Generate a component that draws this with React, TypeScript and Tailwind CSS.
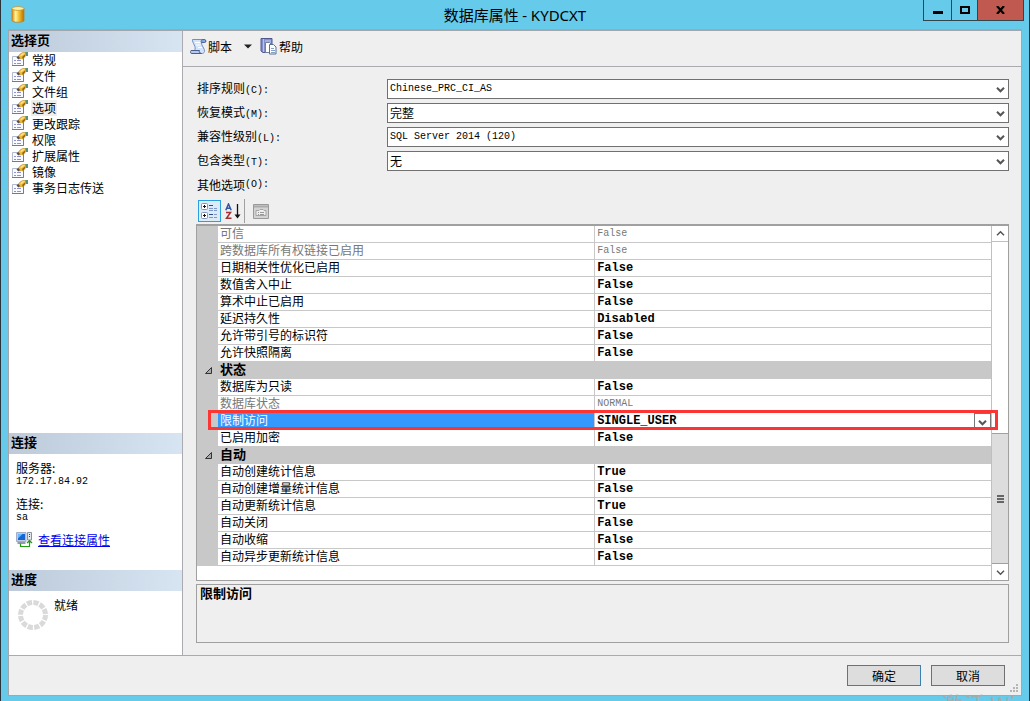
import React from "react";

const pages = ["常规", "文件", "文件组", "选项", "更改跟踪", "权限", "扩展属性", "镜像", "事务日志传送"];

type Field = { id: string; label: string; hotkey: string; value: string; latin: boolean };
const fields: Field[] = [
  { id: "collation", label: "排序规则", hotkey: "C", value: "Chinese_PRC_CI_AS", latin: true },
  { id: "recovery", label: "恢复模式", hotkey: "M", value: "完整", latin: false },
  { id: "compat", label: "兼容性级别", hotkey: "L", value: "SQL Server 2014 (120)", latin: true },
  { id: "contain", label: "包含类型", hotkey: "T", value: "无", latin: false },
];

type Row = { name: string; value?: string; muted?: boolean; group?: boolean; selected?: boolean };
const rows: Row[] = [
  { name: "可信", value: "False", muted: true },
  { name: "跨数据库所有权链接已启用", value: "False", muted: true },
  { name: "日期相关性优化已启用", value: "False" },
  { name: "数值舍入中止", value: "False" },
  { name: "算术中止已启用", value: "False" },
  { name: "延迟持久性", value: "Disabled" },
  { name: "允许带引号的标识符", value: "False" },
  { name: "允许快照隔离", value: "False" },
  { name: "状态", group: true },
  { name: "数据库为只读", value: "False" },
  { name: "数据库状态", value: "NORMAL", muted: true },
  { name: "限制访问", value: "SINGLE_USER", selected: true },
  { name: "已启用加密", value: "False" },
  { name: "自动", group: true },
  { name: "自动创建统计信息", value: "True" },
  { name: "自动创建增量统计信息", value: "False" },
  { name: "自动更新统计信息", value: "True" },
  { name: "自动关闭", value: "False" },
  { name: "自动收缩", value: "False" },
  { name: "自动异步更新统计信息", value: "False" },
];

function Chevron({ up = false, bold = false }: { up?: boolean; bold?: boolean }) {
  return (
    <svg width="9" height="9" viewBox="0 0 9 9" fill="none" stroke="#555" strokeWidth={bold ? 2 : 1.5}>
      <path d={up ? "M1 6.2 4.5 2.7 8 6.2" : "M1 2.8 4.5 6.3 8 2.8"} />
    </svg>
  );
}

function PageIcon() {
  return (
    <svg className="shrink-0" width="16" height="16" viewBox="0 0 16 16">
      <path d="M.5 4.5h11v9H.5z" fill="#fafaff" stroke="#b4bacb" />
      <path d="M11.500 6v7.500H0" fill="none" stroke="#737b92" />
      <path d="M2 8.500h2M5 8.500h4M2 11.500h2M5 11.500h4" stroke="#8892d8" />
      <path d="M5 5.500 8 2l2.500-1.500H14L13.500 4 11 7 9.500 6.500 8 7z" fill="#eeb93a" stroke="#b08324" strokeWidth=".5" />
      <path d="M8 3.500 10.500 1.200H13L9.500 4z" fill="#ffe68a" />
      <path d="m4.500 5.500 1.800-1.500L8 6 6.500 7.500z" fill="#55503c" />
      <path d="m10 5 3-2.500v1.800L11 7z" fill="#94691a" />
      <path d="M13.500 0H16v4h-2.200z" fill="#5d8f76" />
    </svg>
  );
}

function DatabaseIcon() {
  return (
    <svg width="14" height="17" viewBox="0 0 14 17">
      <defs>
        <linearGradient id="gold" x1="0" x2="1">
          <stop offset="0" stopColor="#d8890b" />
          <stop offset=".3" stopColor="#fff2a0" />
          <stop offset=".6" stopColor="#f5bd23" />
          <stop offset="1" stopColor="#b56d08" />
        </linearGradient>
      </defs>
      <path d="M1 2.500v12c0 2.300 12 2.300 12 0v-12z" fill="url(#gold)" stroke="#b98324" strokeWidth=".8" />
      <ellipse cx="7" cy="2.500" rx="6" ry="1.900" fill="#fff0a0" stroke="#c59432" strokeWidth=".8" />
    </svg>
  );
}

function ScriptIcon() {
  return (
    <svg width="17" height="17" viewBox="0 0 17 17" strokeLinejoin="round">
      <path d="M2.500 1.500h12c1.500 0 2 3 0 3h-3c-.5 3 3.500 6 3 9-.3 1.500-1.500 2-3 2l-7-3C7 9 2 5 2.500 1.500z" fill="#d3e3fa" stroke="#6f8fc5" />
      <path d="M11.500 4.500c-1-1 0-3 1.500-3h1.500c1.500 0 2 3 0 3z" fill="#8ba6d6" stroke="#4a65a0" />
      <path d="M1 12.500h8.500c-.8 1 .3 3 2 3H2c-1.800 0-2-2-1-3z" fill="#b5c9ec" stroke="#4a5f8c" />
      <path d="M5 4.500h5M6 7h4.500M8 9.500h4" stroke="#fff" strokeWidth="1.200" />
    </svg>
  );
}

function HelpIcon() {
  return (
    <svg width="17" height="17" viewBox="0 0 17 17">
      <path d="M1 .5h11v14H3L1 13z" fill="#8590c9" stroke="#4d568f" />
      <path d="M3.500 1v13" stroke="#b9c1ec" />
      <path d="M5 2h6v3H5z" fill="#a6b0df" />
      <path d="M5.500 4.500h4l2 2v8h-6z" fill="#fff" stroke="#71819d" />
      <path d="M9.500 6.500h4l2.500 2.500v7H9.500z" fill="#f8fbff" stroke="#5a7092" />
      <path d="M11 10.500h3M11 12.500h4M11 14.500h4" stroke="#87a1c4" />
    </svg>
  );
}

function CategoryIcon() {
  return (
    <svg width="17" height="17" viewBox="0 0 17 17" fill="none">
      <rect x=".5" y=".5" width="6" height="6" rx="1" fill="#fff" stroke="#8195bb" />
      <rect x=".5" y="9.500" width="6" height="6" rx="1" fill="#fff" stroke="#8195bb" />
      <path d="M2 3.500h3M3.500 2v3M2 12.500h3M3.500 11v3" stroke="#111" />
      <path d="M8 2.500h4M8 11.500h4" stroke="#2d4d83" />
      <path d="M8 5.500h4M13 5.500h3M8 7.500h4M13 7.500h3M8 14.500h4M13 14.500h3M13 11.500h3" stroke="#7f99c6" />
    </svg>
  );
}

function SortIcon() {
  return (
    <svg width="16" height="17" viewBox="0 0 16 17" fill="none">
      <path d="M.8 7.200 3.500 1 6.200 7.200M2 5.200h3" stroke="#2f55a8" strokeWidth="1.500" />
      <path d="M1 9.500h4.500L1.500 15.200H6.500" stroke="#a33030" strokeWidth="1.500" />
      <path d="M12.500 1v13" stroke="#111" strokeWidth="1.300" />
      <path d="M9.500 11.500h6l-3 4z" fill="#111" />
    </svg>
  );
}

function PropertyPageIcon() {
  return (
    <svg width="16" height="15" viewBox="0 0 16 15" fill="none">
      <path d="M.5.5h15v14H.5z" fill="#d3d3d3" stroke="#9a9a9a" />
      <path d="M1 2.500h14" stroke="#aaa" strokeWidth="2" />
      <path d="M3 6.500h3l1-1h3l1 1h2v5H3z" fill="#eee" stroke="#a5a5a5" />
      <path d="M5 8.500h1M7 8.500h4M5 10.500h1M7 10.500h4" stroke="#999" />
    </svg>
  );
}

function ConnectionIcon() {
  return (
    <svg className="shrink-0" width="17" height="16" viewBox="0 0 17 16" fill="none">
      <path d="M.5.5h9.500v9H.5z" fill="#c3cbdb" stroke="#a3adc4" />
      <path d="M2 2h7v6H2z" fill="#1764d8" />
      <path d="M2 2h4.500L2 6.500z" fill="#66b8ff" />
      <path d="M1.500 11h8" stroke="#8f9ab3" strokeWidth="2" />
      <path d="M11.500.5h4V8h-4z" fill="#e3e7ed" stroke="#8a929e" />
      <path d="M13 2.500h1M13 4.500h1" stroke="#444" />
      <path d="M4.500 11.500v3h9V9M11 11l2.500-2.500L16 11" stroke="#239a15" strokeWidth="1.200" />
    </svg>
  );
}

function PanelHeader({ children }: { children: React.ReactNode }) {
  return (
    <h2 className="flex h-[21px] shrink-0 items-center bg-linear-to-r from-[#bdcad9] to-[#d7e5f3] pb-1 pl-0.5 text-[13px] font-bold">
      {children}
    </h2>
  );
}

function Latin({ children }: { children: React.ReactNode }) {
  return <span className="font-['Liberation_Mono',monospace] text-[10px]">{children}</span>;
}

function PropertyRow({ row }: { row: Row }) {
  if (row.group) {
    return (
      <tr className="h-[17px] bg-[#c8c8c8]">
        <td className="p-0">
          <svg className="ml-2" width="7" height="7" viewBox="0 0 7 7">
            <path d="M6.500 .5v6h-6z" fill="#aaa" stroke="#333" />
          </svg>
        </td>
        <th colSpan={2} scope="rowgroup" className="p-0 text-left">
          <div className="h-[17px] pl-0.5 text-[13px] leading-[14px] font-bold">{row.name}</div>
        </th>
      </tr>
    );
  }
  return (
    <tr className={row.muted ? "h-[17px] text-[#777]" : "h-[17px]"}>
      <td className="bg-[#c8c8c8] p-0" />
      <th
        scope="row"
        className={
          "border-r border-b border-[#c8c8c8] p-0 text-left font-normal " +
          (row.selected ? "bg-[#3399ff] text-white" : "")
        }
      >
        <div className="h-4 pl-0.5 leading-[14px] whitespace-nowrap">{row.name}</div>
      </th>
      <td
        className={
          "border-b border-[#c8c8c8] p-0 font-['Liberation_Mono',monospace] " +
          (row.muted ? "text-[10px]" : "text-[12px] font-bold")
        }
      >
        {row.selected ? (
          <div className="relative flex h-4">
            <select aria-label={row.name} className="h-4 w-full appearance-none bg-white pl-0.5 leading-4 outline-none">
              <option>{row.value}</option>
            </select>
            <span className="pointer-events-none absolute inset-y-0 right-0 flex w-[17px] items-center justify-center border border-[#777] bg-white pt-0.5">
              <Chevron bold />
            </span>
          </div>
        ) : (
          <div className="h-4 pl-0.5 leading-4">{row.value}</div>
        )}
      </td>
    </tr>
  );
}

export default function App() {
  return (
    <div className="relative flex min-h-screen flex-col overflow-hidden border-x border-[#28333b] bg-[#66cbea] pr-[7px] pb-[5px] pl-[7px] font-['Noto_Sans_CJK_SC',sans-serif] text-[12px] leading-4 text-black">
      <header className="relative flex h-[29px] shrink-0 items-center justify-center">
        <div className="absolute top-1.5 left-[3px]">
          <DatabaseIcon />
        </div>
        <h1 className="text-[15px] leading-5">
          数据库属性 <span className="font-['Noto_Sans',sans-serif] text-[15px]">- KYDCXT</span>
        </h1>
        <div className="absolute top-0 -right-0.5 flex h-[21px] border-x border-b border-[#33444c]">
          <button aria-label="最小化" className="flex w-[28px] items-center justify-center border-r border-[#33444c]">
            <span className="mt-1 h-[3px] w-2.5 bg-black" />
          </button>
          <button aria-label="最大化" className="flex w-[26px] items-center justify-center border-r border-[#33444c]">
            <span className="h-2 w-2.5 border-2 border-black" />
          </button>
          <button aria-label="关闭" className="flex w-[45px] items-center justify-center bg-[#c0594f]">
            <svg width="9" height="8" viewBox="0 0 9 8" stroke="#000" strokeWidth="2.200">
              <path d="m1 0 7 8M8 0 1 8" />
            </svg>
          </button>
        </div>
      </header>

      <div className="flex flex-1 flex-col border border-t-2 border-[#a3a7ab] bg-[#efefef]">
        <div className="flex flex-1 border-b border-[#aaaab0]">
          <aside className="flex w-[174px] shrink-0 flex-col border-r border-[#aaaab0] bg-white">
            <PanelHeader>选择页</PanelHeader>
            <nav className="flex-1">
              {pages.map((p) => (
                <a key={p} href="#" className="flex h-4 items-center gap-[3px] pl-[3px]">
                  <PageIcon />
                  <span className={p === "选项" ? "bg-[#eee] px-px" : "px-px"}>{p}</span>
                </a>
              ))}
            </nav>
            <section>
              <PanelHeader>连接</PanelHeader>
              <div className="px-[7px] pt-2 pb-[22px] leading-3">
                <p>服务器:</p>
                <p className="h-3 leading-[10px]"><Latin>172.17.84.92</Latin></p>
                <p className="mt-3">连接:</p>
                <p className="h-3 leading-[10px]"><Latin>sa</Latin></p>
                <a href="#" className="mt-2.5 flex h-4 items-center gap-[5px] text-[#0000ee]">
                  <ConnectionIcon />
                  <span className="underline">查看连接属性</span>
                </a>
              </div>
            </section>
            <section>
              <PanelHeader>进度</PanelHeader>
              <div className="flex h-16 gap-[5px] px-2 pt-1.5">
                <svg className="mt-0.5" width="32" height="32" viewBox="0 0 32 32">
                  <circle cx="16" cy="16" r="12.500" fill="none" stroke="#dadada" strokeWidth="5" strokeDasharray="5.2 1.345" />
                </svg>
                <p>就绪</p>
              </div>
            </section>
          </aside>

          <main className="flex min-w-0 flex-1 flex-col">
            <div className="flex h-9 shrink-0 items-center border-b border-[#aaaab0] pb-1 pl-[7px]">
              <button className="flex items-center gap-px"><ScriptIcon />脚本</button>
              <button aria-label="脚本选项" className="mr-1 ml-2 flex w-4 justify-center">
                <svg width="8" height="5" viewBox="0 0 8 5"><path d="M0 .5h8L4 4.500z" fill="#222" /></svg>
              </button>
              <button className="flex items-center gap-0.5"><HelpIcon />帮助</button>
            </div>

            <div className="flex flex-1 flex-col pt-3 pr-3 pb-3 pl-[13px]">
              <form className="flex flex-col gap-1 pl-px">
                {fields.map((f) => (
                  <div key={f.id} className="flex h-5 items-center">
                    <label htmlFor={f.id} className="w-[190px] shrink-0">
                      {f.label}<Latin>({f.hotkey}):</Latin>
                    </label>
                    <div className="relative flex h-5 flex-1">
                      <select
                        id={f.id}
                        className={
                          "h-5 w-full appearance-none border border-[#707070] bg-white px-0.5 leading-4 outline-none " +
                          (f.latin ? "font-['Liberation_Mono',monospace] text-[10px]" : "text-[12px]")
                        }
                      >
                        <option>{f.value}</option>
                      </select>
                      <span className="pointer-events-none absolute inset-y-0 right-1 flex items-center">
                        <Chevron bold />
                      </span>
                    </div>
                  </div>
                ))}
                <p className="flex h-5 items-center">其他选项<Latin>(O):</Latin></p>
              </form>

              <div className="mt-1 mb-px flex h-6 items-center pl-0.5">
                <button aria-label="按分类排序" className="flex h-[22px] w-[23px] items-center justify-center border border-[#2a9fe0] bg-[#dcebfa]">
                  <CategoryIcon />
                </button>
                <button aria-label="按字母排序" className="flex h-[22px] w-[23px] items-center justify-center border-0">
                  <SortIcon />
                </button>
                <span className="h-6 w-px bg-[#a0a0a0]" />
                <button aria-label="属性页" className="ml-2" disabled>
                  <PropertyPageIcon />
                </button>
              </div>

              <div className="relative flex flex-1 border border-t-2 border-[#a0a0a0] bg-white">
                <div className="min-w-0 flex-1">
                  <table className="w-full table-fixed border-separate border-spacing-0">
                    <colgroup>
                      <col className="w-[21px]" />
                      <col className="w-[47.500%]" />
                      <col />
                    </colgroup>
                    <tbody>
                      {rows.map((r) => (
                        <PropertyRow key={r.name} row={r} />
                      ))}
                    </tbody>
                  </table>
                </div>
                <div className="flex w-[17px] shrink-0 flex-col border-l border-[#c0c0c0]">
                  <button aria-label="向上滚动" className="flex h-4 items-center justify-center border-b border-[#c0c0c0]">
                    <Chevron up />
                  </button>
                  <div className="flex-1" />
                  <div className="flex h-[131px] flex-col items-center justify-center gap-px border-y border-[#a0a0a0] bg-[#ddd]">
                    <span className="h-0.5 w-[7px] bg-[#666]" />
                    <span className="h-0.5 w-[7px] bg-[#666]" />
                    <span className="h-0.5 w-[7px] bg-[#666]" />
                  </div>
                  <button aria-label="向下滚动" className="flex h-4 items-center justify-center">
                    <Chevron />
                  </button>
                </div>
                <div className="pointer-events-none absolute top-[184px] right-2.5 left-[11px] h-5 border-3 border-[#fb3434]" />
              </div>

              <div className="mt-[3px] h-[59px] shrink-0 border border-[#a0a0a0] px-[3px]">
                <p className="text-[13px] leading-4 font-bold">限制访问</p>
              </div>
            </div>
          </main>
        </div>

        <footer className="relative flex h-[39px] shrink-0 items-center justify-end gap-2.5 pr-4">
          <button className="h-[21px] w-[74px] border border-[#3c7fb1] bg-[#ddd]">确定</button>
          <button className="h-[21px] w-[74px] border border-[#707070] bg-[#ddd]">取消</button>
          <svg className="absolute right-0.5 bottom-0.5" width="9" height="9" viewBox="0 0 9 9" fill="#b5b5b5">
            <path d="M6 0h2v2H6zM3 3h2v2H3zM6 3h2v2H6zM0 6h2v2H0zM3 6h2v2H3zM6 6h2v2H6z" />
          </svg>
        </footer>
      </div>
      <div className="pointer-events-none absolute right-0 bottom-0 h-[9px] text-[22px] leading-[22px] whitespace-nowrap text-[#a4acb0]">
        激活 Win
      </div>
    </div>
  );
}
